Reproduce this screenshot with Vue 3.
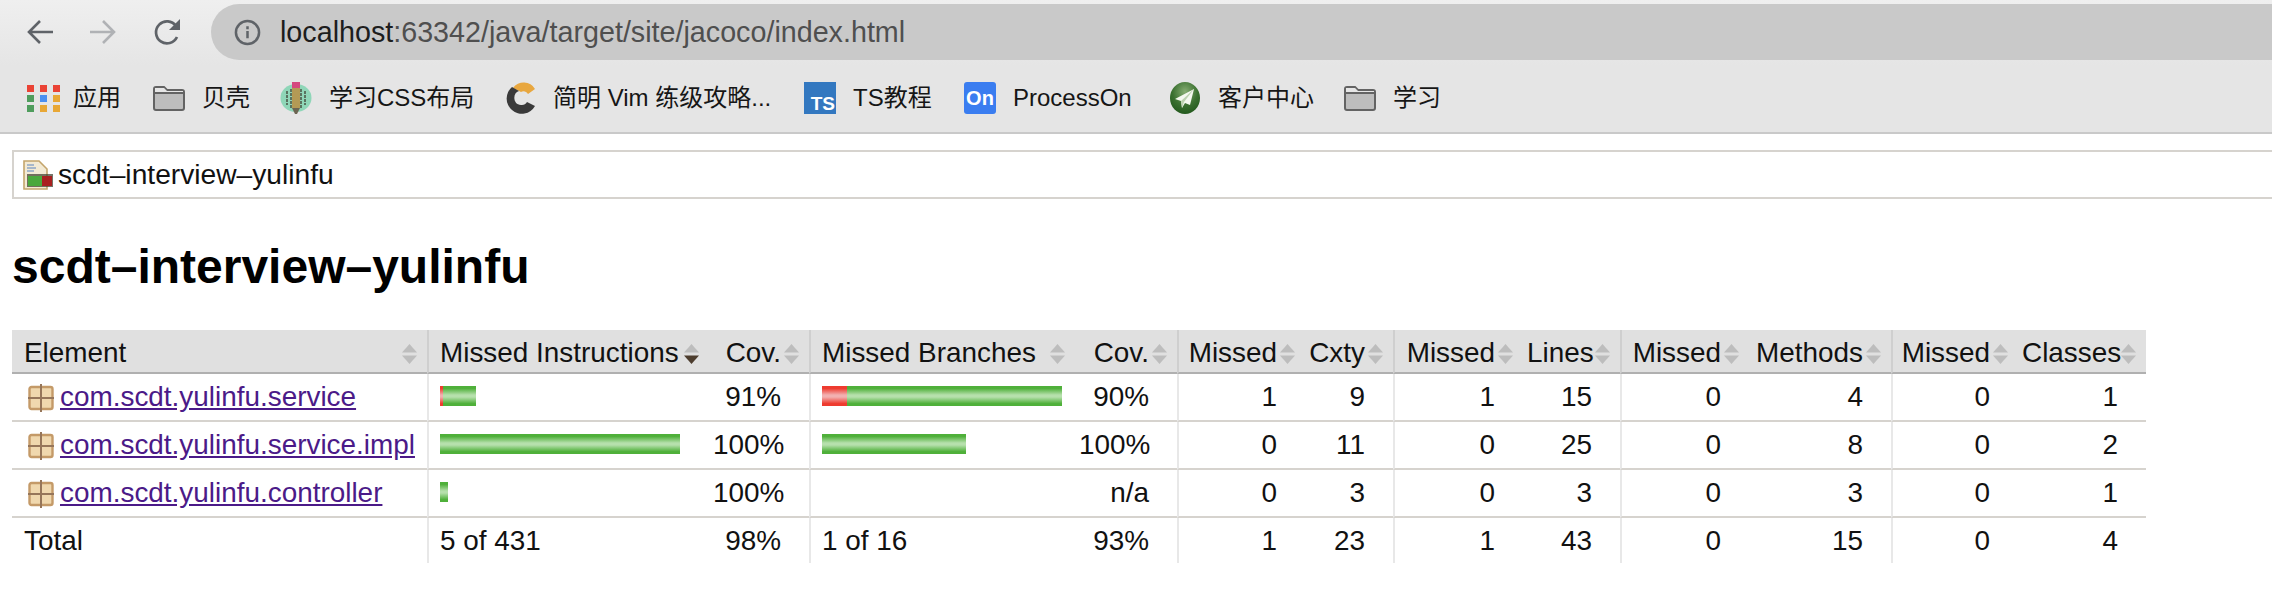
<script setup>
const bookmarks = [
  { label: '应用', icon: 'apps', width: 126 },
  { label: '贝壳', icon: 'folder', width: 127 },
  { label: '学习CSS布局', icon: 'pencil', width: 224 },
  { label: '简明 Vim 练级攻略...', icon: 'c', width: 300 },
  { label: 'TS教程', icon: 'ts', width: 160 },
  { label: 'ProcessOn', icon: 'on', width: 205 },
  { label: '客户中心', icon: 'plane', width: 175 },
  { label: '学习', icon: 'folder', width: 120 }
]

const appColors = ['#ea4335', '#ea4335', '#ea4335', '#4f9d5d', '#4a8ff0', '#e8a735', '#4f9d5d', '#e8a735', '#e8a735']

const columns = [
  { label: 'Element', width: 415, cls: 'left' },
  { label: 'Missed Instructions', width: 282, cls: 'left sep first', active: true },
  { label: 'Cov.', width: 100, cls: 'num' },
  { label: 'Missed Branches', width: 266, cls: 'left sep first' },
  { label: 'Cov.', width: 102, cls: 'num' },
  { label: 'Missed', width: 128, cls: 'num sep' },
  { label: 'Cxty', width: 88, cls: 'num' },
  { label: 'Missed', width: 130, cls: 'num sep' },
  { label: 'Lines', width: 97, cls: 'num' },
  { label: 'Missed', width: 129, cls: 'num sep' },
  { label: 'Methods', width: 142, cls: 'num' },
  { label: 'Missed', width: 127, cls: 'num sep' },
  { label: 'Classes', width: 128, cls: 'num' }
]

const rows = [
  { name: 'com.scdt.yulinfu.service', ins: [3, 33], insCov: '91%', br: [25, 215], brCov: '90%', rest: [1, 9, 1, 15, 0, 4, 0, 1] },
  { name: 'com.scdt.yulinfu.service.impl', ins: [0, 240], insCov: '100%', br: [0, 144], brCov: '100%', rest: [0, 11, 0, 25, 0, 8, 0, 2] },
  { name: 'com.scdt.yulinfu.controller', ins: [0, 8], insCov: '100%', br: [0, 0], brCov: 'n/a', rest: [0, 3, 0, 3, 0, 3, 0, 1] }
]

const total = ['5 of 431', '98%', '1 of 16', '93%', 1, 23, 1, 43, 0, 15, 0, 4]
</script>

<template>
  <div class="page">
    <header class="toolbar">
      <div class="nav">
        <svg class="nav-icon back" viewBox="0 0 26 26" fill="none" stroke="#5f6368" stroke-width="2.6">
          <path d="M26 13H3M13 2 2 13l11 11" />
        </svg>
        <svg class="nav-icon forward" viewBox="0 0 26 26" fill="none" stroke="#b0b2b5" stroke-width="2.6">
          <path d="M0 13h23M13 2l11 11-11 11" />
        </svg>
        <svg class="nav-icon reload" viewBox="0 0 28 28" fill="none" stroke="#5f6368" stroke-width="2.7">
          <path d="M23 19a11 11 0 1 1-1-11" />
          <path d="M26 1v11H15z" fill="#5f6368" stroke="none" />
        </svg>
        <div class="omnibox">
          <svg class="info" viewBox="0 0 28 28" fill="none" stroke="#5f6368" stroke-width="2.6">
            <circle cx="14" cy="14" r="12" />
            <path d="M14 12.5V20M14 7.5v3" />
          </svg>
          <span class="url"><span class="host">localhost</span>:63342/java/target/site/jacoco/index.html</span>
        </div>
      </div>
      <nav class="bookmarks">
        <a v-for="(b, n) in bookmarks" :key="n" class="bookmark" :style="{ width: b.width + 'px' }">
          <span v-if="b.icon === 'apps'" class="apps">
            <i v-for="(c, i) in appColors" :key="i" :style="{ background: c }"></i>
          </span>
          <svg v-else-if="b.icon === 'folder'" class="bm-icon" viewBox="0 0 32 26">
            <path d="M1 4a2 2 0 0 1 2-2h8l3 3h15a2 2 0 0 1 2 2v16a2 2 0 0 1-2 2H3a2 2 0 0 1-2-2z" fill="#bdbdbd" stroke="#636363" stroke-width="2" />
            <path d="M1 8h30" stroke="#636363" stroke-width="2" />
            <path d="M2 3h9l3 3h16v1H2z" fill="#e6e6e6" />
          </svg>
          <svg v-else-if="b.icon === 'pencil'" class="bm-icon" viewBox="0 0 32 32">
            <ellipse cx="16" cy="16" rx="15.5" ry="14" fill="#8fd6b8" />
            <rect x="12" y="0" width="8" height="6" fill="#d5487f" />
            <rect x="12" y="6" width="8" height="20" fill="#b39a55" />
            <path d="M7 9v14M25 9v14M11 7v19M21 7v19" stroke="#4d5a4a" stroke-width="1.6" stroke-dasharray="3 1" />
            <path d="M12 26h8l-3 6h-2z" fill="#6c6552" />
          </svg>
          <svg v-else-if="b.icon === 'c'" class="bm-icon" viewBox="0 0 32 32">
            <path d="M9 6A13 13 0 0 1 31 7l-7 5a5 5 0 0 0-7-2z" fill="#e8a73f" />
            <path d="M8 5A15 15 0 0 0 8 28a15 15 0 0 0 23-4l-8-4a6 6 0 0 1-6 3c-8 0-9-12-2-14z" fill="#3a3a3a" />
          </svg>
          <span v-else-if="b.icon === 'ts'" class="ts">TS</span>
          <span v-else-if="b.icon === 'on'" class="on">On</span>
          <svg v-else class="bm-icon" viewBox="0 0 32 32">
            <defs>
              <radialGradient id="planeBg" cx="50%" cy="30%" r="70%">
                <stop offset="0" stop-color="#86ad72" />
                <stop offset="0.6" stop-color="#3a7030" />
                <stop offset="1" stop-color="#245a1e" />
              </radialGradient>
            </defs>
            <ellipse cx="16" cy="16" rx="15" ry="16" fill="url(#planeBg)" />
            <path d="M25 7 6 17l6 2 1 7 3-5 5 2z" fill="#f4f8ef" />
            <path d="M25 7 12 19l1 7 2-6z" fill="#bcd2b0" />
          </svg>
          <span class="bm-label">{{ b.label }}</span>
        </a>
      </nav>
    </header>

    <main class="content">
      <div class="breadcrumb">
        <svg class="session" viewBox="0 0 30 30">
          <path d="M1 1h15l8 8v20H1z" fill="#f3ead4" stroke="#c4a56c" stroke-width="1.6" />
          <path d="M4 5h7M4 8h9M4 11h7" stroke="#8fa7c6" stroke-width="1.5" />
          <rect x="4" y="14" width="26" height="13" fill="#3a3a2a" opacity="0.7" />
          <rect x="5" y="16" width="14" height="10" fill="#4ba83c" />
          <rect x="19" y="16" width="10" height="10" fill="#a92020" />
        </svg>
        <span>scdt–interview–yulinfu</span>
      </div>

      <h1>scdt–interview–yulinfu</h1>

      <table class="coverage">
        <colgroup>
          <col v-for="(c, i) in columns" :key="i" :style="{ width: c.width + 'px' }" />
        </colgroup>
        <thead>
          <tr>
            <th v-for="(c, i) in columns" :key="i" :class="c.cls">
              {{ c.label }}
              <svg class="sort" viewBox="0 0 15 20">
                <path d="M7.5 0 15 8.5H0z" fill="#bdbdbd" />
                <path d="M0 11.5h15L7.5 20z" :fill="c.active ? '#4d3d2e' : '#bdbdbd'" />
              </svg>
            </th>
          </tr>
        </thead>
        <tbody>
          <tr v-for="r in rows" :key="r.name">
            <td class="left element">
              <svg class="pkg" viewBox="0 0 26 28">
                <rect x="1.5" y="3" width="23" height="22" rx="2" fill="#f0d8ae" stroke="#c49a68" stroke-width="2.4" />
                <path d="M13 0v28M0 14h26" stroke="#96765a" stroke-width="2" />
              </svg>
              <a class="link">{{ r.name }}</a>
            </td>
            <td class="sep first">
              <div class="bar">
                <i class="red" :style="{ width: r.ins[0] + 'px' }"></i>
                <i class="green" :style="{ width: r.ins[1] + 'px' }"></i>
              </div>
            </td>
            <td class="num">{{ r.insCov }}</td>
            <td class="sep first">
              <div class="bar">
                <i class="red" :style="{ width: r.br[0] + 'px' }"></i>
                <i class="green" :style="{ width: r.br[1] + 'px' }"></i>
              </div>
            </td>
            <td class="num">{{ r.brCov }}</td>
            <td v-for="(v, i) in r.rest" :key="i" class="num" :class="{ sep: i % 2 === 0 }">{{ v }}</td>
          </tr>
        </tbody>
        <tfoot>
          <tr>
            <td class="left">Total</td>
            <td class="sep first">{{ total[0] }}</td>
            <td class="num">{{ total[1] }}</td>
            <td class="sep first">{{ total[2] }}</td>
            <td class="num">{{ total[3] }}</td>
            <td v-for="(v, i) in total.slice(4)" :key="i" class="num" :class="{ sep: i % 2 === 0 }">{{ v }}</td>
          </tr>
        </tfoot>
      </table>
    </main>
  </div>
</template>

<style>
html,
body {
  margin: 0;
  background: #fff;
  overflow: hidden;
}
</style>

<style scoped>
.page {
  width: 2272px;
  height: 594px;
  overflow: hidden;
  font-family: "Liberation Sans", "Noto Sans CJK SC", sans-serif;
  color: #111;
}

.toolbar {
  height: 132px;
  background: linear-gradient(#efefef, #e5e5e5 50%);
  border-bottom: 2px solid #c9c9c9;
}

.nav {
  display: flex;
  align-items: center;
  height: 64px;
  padding-left: 27px;
}

.nav-icon {
  width: 26px;
  height: 26px;
  flex: none;
}

.forward {
  margin-left: 37px;
}

.reload {
  margin-left: 38px;
  width: 28px;
  height: 28px;
}

.omnibox {
  flex: 1;
  display: flex;
  align-items: center;
  height: 56px;
  margin-left: 29px;
  padding-left: 23px;
  background: #c9c9c9;
  border-radius: 28px 0 0 28px;
}

.info {
  width: 27px;
  height: 27px;
}

.url {
  margin-left: 19px;
  font-size: 28.7px;
  color: #4f4f4f;
}

.host {
  color: #1d1d1d;
}

.bookmarks {
  display: flex;
  align-items: center;
  height: 68px;
  padding-left: 27px;
}

.bookmark {
  display: flex;
  align-items: center;
  flex: none;
  gap: 17px;
}

.bm-label {
  font-size: 24px;
  line-height: 32px;
  color: #161616;
  white-space: nowrap;
}

.bm-icon {
  width: 32px;
  height: 32px;
  flex: none;
}

.apps {
  display: grid;
  grid-template-columns: repeat(3, 7px);
  gap: 3px 6px;
  width: 26px;
  margin-right: 3px;
}

.apps i {
  height: 7px;
}

.ts,
.on {
  display: flex;
  align-items: flex-end;
  justify-content: flex-end;
  flex: none;
  width: 32px;
  height: 32px;
  color: #fff;
  font-weight: bold;
  box-sizing: border-box;
}

.ts {
  background: #3378c0;
  font-size: 19px;
  padding-right: 1px;
  line-height: 20px;
}

.on {
  align-items: center;
  justify-content: center;
  background: #3a7df0;
  border-radius: 3px;
  font-size: 20px;
}

.content {
  font-size: 28.2px;
}

.breadcrumb {
  display: flex;
  align-items: center;
  gap: 5px;
  box-sizing: border-box;
  height: 49px;
  margin: 16px 0 0 12px;
  padding-left: 9px;
  border: 2px solid #d6d3ce;
  border-right: none;
}

.session {
  width: 30px;
  height: 30px;
}

h1 {
  margin: 0 0 0 12px;
  height: 131px;
  line-height: 135px;
  font-size: 48px;
  font-weight: bold;
  color: #000;
}

.coverage {
  width: 2134px;
  margin-left: 12px;
  table-layout: fixed;
  border-collapse: separate;
  border-spacing: 0;
  font-size: 27.9px;
}

th,
td {
  box-sizing: border-box;
  padding: 0 28px 0 4px;
  white-space: nowrap;
  font-weight: normal;
  text-align: left;
  vertical-align: middle;
}

th {
  position: relative;
  height: 44px;
  padding-top: 3px;
  background: #e0e0e0;
  border-bottom: 2px solid #b0b0b0;
}

tbody td {
  height: 48px;
  border-bottom: 2px solid #d6d3ce;
}

tfoot td {
  height: 45px;
}

.left {
  padding-left: 12px;
}

td.first,
th.first {
  padding-left: 11px;
  padding-right: 0;
}

.num {
  text-align: right;
}

.sep {
  border-left: 2px solid #e8e8e8;
}

th.sep {
  border-left-color: #cfcfcf;
}

.sort {
  position: absolute;
  right: 10px;
  top: 14px;
  width: 15px;
  height: 20px;
}

td.element {
  padding-left: 16px;
}

.pkg {
  width: 26px;
  height: 28px;
  margin-right: 6px;
  vertical-align: -6px;
}

.link {
  color: #4b1a88;
  text-decoration: underline;
}

.bar {
  display: flex;
  height: 20px;
  margin-bottom: 2px;
}

.bar i {
  display: block;
  height: 20px;
}

.green {
  background: linear-gradient(#4fb03a, #4fb03a 12%, #b6e0ac 45%, #b6e0ac 55%, #4fb03a 88%, #4fb03a);
}

.red {
  background: linear-gradient(#ee3b2f, #ee3b2f 12%, #f2b0b0 45%, #f2b0b0 55%, #ee3b2f 88%, #ee3b2f);
}
</style>
